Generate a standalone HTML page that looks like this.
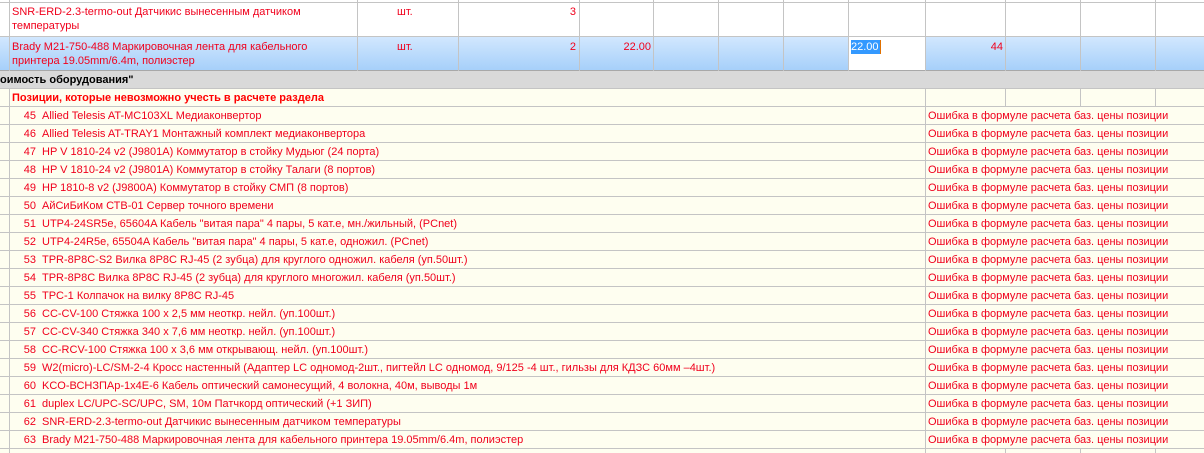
<!DOCTYPE html>
<html><head><meta charset="utf-8"><style>
*{margin:0;padding:0;box-sizing:border-box}
body{width:1204px;height:453px;overflow:hidden;background:#fefef0;font-family:"Liberation Sans","DejaVu Sans",sans-serif;font-size:11px;color:#f0001c;position:relative}
.a{position:absolute}
.vl{position:absolute;width:1px;background:#c4c4c4}
.hl{position:absolute;height:1px;background:#c4c4c4;left:0;width:1204px}
.t{position:absolute;white-space:nowrap;line-height:14px}
.r{text-align:right}
</style></head><body>
<div class="a" style="left:0;top:0;width:1204px;height:36px;background:#fff"></div>
<div class="a" style="left:0;top:36px;width:1204px;height:35px;background:linear-gradient(#d3e8fe,#a5cffa)"></div>
<div class="a" style="left:848px;top:37px;width:77px;height:34px;background:#fff"></div>
<div class="a" style="left:0;top:71px;width:1204px;height:17px;background:#d9d9d9"></div>
<div class="hl" style="top:2px"></div>
<div class="hl" style="top:36px"></div>
<div class="hl" style="top:70px;background:#a8a8a8"></div>
<div class="hl" style="top:88px"></div>
<div class="vl" style="left:9px;top:0;height:71px"></div>
<div class="vl" style="left:357px;top:0;height:71px"></div>
<div class="vl" style="left:458px;top:0;height:71px"></div>
<div class="vl" style="left:579px;top:0;height:71px"></div>
<div class="vl" style="left:653px;top:0;height:71px"></div>
<div class="vl" style="left:718px;top:0;height:71px"></div>
<div class="vl" style="left:783px;top:0;height:71px"></div>
<div class="vl" style="left:848px;top:0;height:71px"></div>
<div class="vl" style="left:925px;top:0;height:71px"></div>
<div class="vl" style="left:1005px;top:0;height:71px"></div>
<div class="vl" style="left:1080px;top:0;height:71px"></div>
<div class="vl" style="left:1155px;top:0;height:71px"></div>
<div class="t" style="left:12px;top:5px">SNR-ERD-2.3-termo-out Датчикис вынесенным датчиком</div>
<div class="t" style="left:12px;top:19px">температуры</div>
<div class="t" style="left:397px;top:5px">шт.</div>
<div class="t r" style="left:540px;top:5px;width:36px">3</div>
<div class="t" style="left:12px;top:40px">Brady M21-750-488 Маркировочная лента для кабельного</div>
<div class="t" style="left:12px;top:54px">принтера 19.05mm/6.4m, полиэстер</div>
<div class="t" style="left:397px;top:40px">шт.</div>
<div class="t r" style="left:540px;top:40px;width:36px">2</div>
<div class="t r" style="left:600px;top:40px;width:51px">22.00</div>
<div class="t" style="left:851px;top:40px;background:#3399ff;color:#fff;padding-right:1px;border-right:1px solid #e07000">22.00</div>
<div class="t r" style="left:960px;top:40px;width:43px">44</div>
<div class="t" style="left:0;top:73px;color:#000;font-weight:bold">оимость оборудования"</div>
<div class="vl" style="left:9px;top:88px;height:365px"></div>
<div class="vl" style="left:925px;top:88px;height:18px"></div>
<div class="vl" style="left:1005px;top:88px;height:18px"></div>
<div class="vl" style="left:1080px;top:88px;height:18px"></div>
<div class="vl" style="left:1155px;top:88px;height:18px"></div>
<div class="vl" style="left:925px;top:106px;height:347px"></div>
<div class="vl" style="left:1005px;top:448px;height:5px"></div>
<div class="vl" style="left:1080px;top:448px;height:5px"></div>
<div class="vl" style="left:1155px;top:448px;height:5px"></div>
<div class="t" style="left:12px;top:91px;font-weight:bold;color:#f00">Позиции, которые невозможно учесть в расчете раздела</div>
<div class="hl" style="top:106px"></div><div class="hl" style="top:124px"></div><div class="hl" style="top:142px"></div><div class="hl" style="top:160px"></div><div class="hl" style="top:178px"></div><div class="hl" style="top:196px"></div><div class="hl" style="top:214px"></div><div class="hl" style="top:232px"></div><div class="hl" style="top:250px"></div><div class="hl" style="top:268px"></div><div class="hl" style="top:286px"></div><div class="hl" style="top:304px"></div><div class="hl" style="top:322px"></div><div class="hl" style="top:340px"></div><div class="hl" style="top:358px"></div><div class="hl" style="top:376px"></div><div class="hl" style="top:394px"></div><div class="hl" style="top:412px"></div><div class="hl" style="top:430px"></div><div class="hl" style="top:448px"></div>
<div class="t r" style="left:10px;top:109px;width:26px">45</div><div class="t" style="left:42px;top:109px">Allied Telesis AT-MC103XL Медиаконвертор</div><div class="t" style="left:928px;top:109px">Ошибка в формуле расчета баз. цены позиции</div>
<div class="t r" style="left:10px;top:127px;width:26px">46</div><div class="t" style="left:42px;top:127px">Allied Telesis AT-TRAY1 Монтажный комплект медиаконвертора</div><div class="t" style="left:928px;top:127px">Ошибка в формуле расчета баз. цены позиции</div>
<div class="t r" style="left:10px;top:145px;width:26px">47</div><div class="t" style="left:42px;top:145px">HP V 1810-24 v2 (J9801A) Коммутатор в стойку Мудьюг (24 порта)</div><div class="t" style="left:928px;top:145px">Ошибка в формуле расчета баз. цены позиции</div>
<div class="t r" style="left:10px;top:163px;width:26px">48</div><div class="t" style="left:42px;top:163px">HP V 1810-24 v2 (J9801A) Коммутатор в стойку Талаги (8 портов)</div><div class="t" style="left:928px;top:163px">Ошибка в формуле расчета баз. цены позиции</div>
<div class="t r" style="left:10px;top:181px;width:26px">49</div><div class="t" style="left:42px;top:181px">HP 1810-8 v2 (J9800A) Коммутатор в стойку СМП (8 портов)</div><div class="t" style="left:928px;top:181px">Ошибка в формуле расчета баз. цены позиции</div>
<div class="t r" style="left:10px;top:199px;width:26px">50</div><div class="t" style="left:42px;top:199px">АйСиБиКом СТВ-01 Сервер точного времени</div><div class="t" style="left:928px;top:199px">Ошибка в формуле расчета баз. цены позиции</div>
<div class="t r" style="left:10px;top:217px;width:26px">51</div><div class="t" style="left:42px;top:217px">UTP4-24SR5e, 65604A Кабель "витая пара" 4 пары, 5 кат.е, мн./жильный, (PCnet)</div><div class="t" style="left:928px;top:217px">Ошибка в формуле расчета баз. цены позиции</div>
<div class="t r" style="left:10px;top:235px;width:26px">52</div><div class="t" style="left:42px;top:235px">UTP4-24R5e, 65504A Кабель "витая пара" 4 пары, 5 кат.е, одножил. (PCnet)</div><div class="t" style="left:928px;top:235px">Ошибка в формуле расчета баз. цены позиции</div>
<div class="t r" style="left:10px;top:253px;width:26px">53</div><div class="t" style="left:42px;top:253px">TPR-8P8C-S2 Вилка 8P8C RJ-45 (2 зубца) для круглого одножил. кабеля (уп.50шт.)</div><div class="t" style="left:928px;top:253px">Ошибка в формуле расчета баз. цены позиции</div>
<div class="t r" style="left:10px;top:271px;width:26px">54</div><div class="t" style="left:42px;top:271px">TPR-8P8C Вилка 8P8C RJ-45 (2 зубца) для круглого многожил. кабеля (уп.50шт.)</div><div class="t" style="left:928px;top:271px">Ошибка в формуле расчета баз. цены позиции</div>
<div class="t r" style="left:10px;top:289px;width:26px">55</div><div class="t" style="left:42px;top:289px">TPC-1 Колпачок на вилку 8P8C RJ-45</div><div class="t" style="left:928px;top:289px">Ошибка в формуле расчета баз. цены позиции</div>
<div class="t r" style="left:10px;top:307px;width:26px">56</div><div class="t" style="left:42px;top:307px">CC-CV-100 Стяжка 100 x 2,5 мм неоткр. нейл. (уп.100шт.)</div><div class="t" style="left:928px;top:307px">Ошибка в формуле расчета баз. цены позиции</div>
<div class="t r" style="left:10px;top:325px;width:26px">57</div><div class="t" style="left:42px;top:325px">CC-CV-340 Стяжка 340 x 7,6 мм неоткр. нейл. (уп.100шт.)</div><div class="t" style="left:928px;top:325px">Ошибка в формуле расчета баз. цены позиции</div>
<div class="t r" style="left:10px;top:343px;width:26px">58</div><div class="t" style="left:42px;top:343px">CC-RCV-100 Стяжка 100 x 3,6 мм открывающ. нейл. (уп.100шт.)</div><div class="t" style="left:928px;top:343px">Ошибка в формуле расчета баз. цены позиции</div>
<div class="t r" style="left:10px;top:361px;width:26px">59</div><div class="t" style="left:42px;top:361px">W2(micro)-LC/SM-2-4 Кросс настенный (Адаптер LC одномод-2шт., пигтейл LC одномод, 9/125 -4 шт., гильзы для КДЗС 60мм –4шт.)</div><div class="t" style="left:928px;top:361px">Ошибка в формуле расчета баз. цены позиции</div>
<div class="t r" style="left:10px;top:379px;width:26px">60</div><div class="t" style="left:42px;top:379px">KCO-ВСНЗПАр-1x4E-6 Кабель оптический самонесущий, 4 волокна, 40м, выводы 1м</div><div class="t" style="left:928px;top:379px">Ошибка в формуле расчета баз. цены позиции</div>
<div class="t r" style="left:10px;top:397px;width:26px">61</div><div class="t" style="left:42px;top:397px">duplex LC/UPC-SC/UPC, SM, 10м Патчкорд оптический (+1 ЗИП)</div><div class="t" style="left:928px;top:397px">Ошибка в формуле расчета баз. цены позиции</div>
<div class="t r" style="left:10px;top:415px;width:26px">62</div><div class="t" style="left:42px;top:415px">SNR-ERD-2.3-termo-out Датчикис вынесенным датчиком температуры</div><div class="t" style="left:928px;top:415px">Ошибка в формуле расчета баз. цены позиции</div>
<div class="t r" style="left:10px;top:433px;width:26px">63</div><div class="t" style="left:42px;top:433px">Brady M21-750-488 Маркировочная лента для кабельного принтера 19.05mm/6.4m, полиэстер</div><div class="t" style="left:928px;top:433px">Ошибка в формуле расчета баз. цены позиции</div>
</body></html>
